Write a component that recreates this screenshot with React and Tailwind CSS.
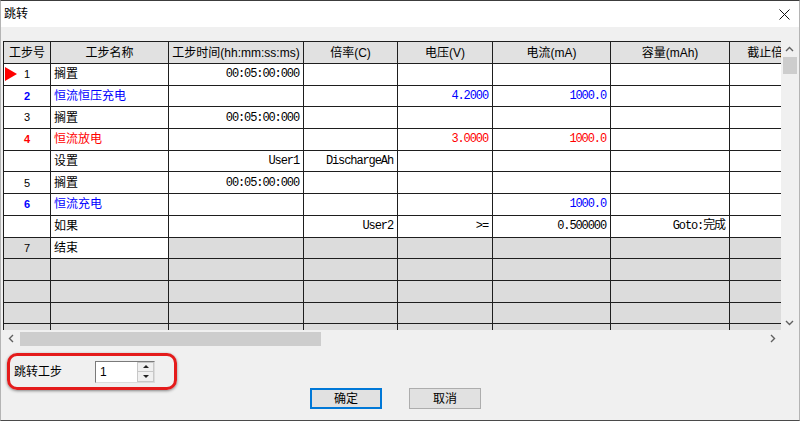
import React from 'react';

const cjk = { fontFamily: '"Liberation Sans", "Noto Sans CJK SC", sans-serif' };
const mono = { fontFamily: '"Liberation Mono", "Noto Sans CJK SC", monospace' };

const widths = ['w-[48px]', 'w-[118px]', 'w-[135px]', 'w-[94px]', 'w-[95px]', 'w-[118px]', 'w-[119px]', 'w-[100px]'];

const headers = ['工步号', '工步名称', '工步时间(hh:mm:ss:ms)', '倍率(C)', '电压(V)', '电流(mA)', '容量(mAh)', '截止倍率(C)'];

const rows = [
  { no: '1', mark: true, name: '搁置', cells: ['00:05:00:000', '', '', '', '', ''] },
  { no: '2', color: 'blue', name: '恒流恒压充电', cells: ['', '', '4.2000', '1000.0', '', ''] },
  { no: '3', name: '搁置', cells: ['00:05:00:000', '', '', '', '', ''] },
  { no: '4', color: 'red', name: '恒流放电', cells: ['', '', '3.0000', '1000.0', '', ''] },
  { no: '', name: '设置', cells: ['User1', 'DischargeAh', '', '', '', ''] },
  { no: '5', name: '搁置', cells: ['00:05:00:000', '', '', '', '', ''] },
  { no: '6', color: 'blue', name: '恒流充电', cells: ['', '', '', '1000.0', '', ''] },
  { no: '', name: '如果', cells: ['', 'User2', '>=', '0.500000', 'Goto:完成', ''] },
  { no: '7', name: '结束', end: true, cells: ['', '', '', '', '', ''] },
];

const colorCls = { blue: 'text-[#0000ff]', red: 'text-[#ff0000]' };

const Chevron = ({ d, className }) => (
  <svg width="9" height="9" viewBox="0 0 9 9" className={className}>
    <path d={d} fill="none" stroke="#606060" strokeWidth="1.4" />
  </svg>
);

const GridRow = ({ row }) => {
  const gray = !row || row.end;
  const txt = row && row.color ? colorCls[row.color] : 'text-black';
  const bgRest = gray ? 'bg-[#dcdcdc]' : 'bg-white';
  return (
    <div className="flex h-[21.7px] shrink-0">
      <div className={`${widths[0]} shrink-0 relative border-l border-r border-b border-[#1e1e1e] ${bgRest} flex items-center justify-center`}>
        {row && row.mark && (
          <span className="absolute left-[1px] top-[3px] w-0 h-0 border-t-[7px] border-b-[7px] border-l-[12px] border-t-transparent border-b-transparent border-l-[#ff0000]" />
        )}
        {row && (
          <span className={`text-[11px] ${row.color ? 'font-bold' : ''} ${txt}`} style={{ fontFamily: '"Liberation Sans", sans-serif' }}>
            {row.no}
          </span>
        )}
      </div>
      <div className={`${widths[1]} shrink-0 border-r border-b border-[#1e1e1e] ${row ? 'bg-white' : 'bg-[#dcdcdc]'} flex items-center pl-[3px] text-[12px] ${txt}`} style={cjk}>
        {row ? row.name : ''}
      </div>
      {widths.slice(2).map((w, i) => (
        <div
          key={i}
          className={`${w} shrink-0 border-r border-b border-[#1e1e1e] ${bgRest} flex items-center justify-end pr-[4px] text-[12px] tracking-[-1.1px] whitespace-nowrap overflow-hidden ${txt}`}
          style={mono}
        >
          {row ? row.cells[i] : ''}
        </div>
      ))}
    </div>
  );
};

const App = () => {
  return (
    <div className="w-[800px] h-[421px] bg-[#f0f0f0] border-t border-b border-t-[#3c3c3c] border-b-[#4a4a4a] border-l border-r border-l-[#b4b4b4] border-r-[#b4b4b4] flex flex-col overflow-hidden" style={cjk}>
      <div className="h-[26px] shrink-0 bg-white flex items-center justify-between pl-[3px] pr-[9px]">
        <span className="text-[12px] text-black">跳转</span>
        <svg width="11" height="11" viewBox="0 0 11 11">
          <path d="M0.5 0.5 L10.5 10.5 M10.5 0.5 L0.5 10.5" stroke="#111" strokeWidth="1" />
        </svg>
      </div>

      <div className="mt-[14px] ml-[2px] w-[794px] h-[306px] flex shrink-0">
        <div className="w-[778px] flex flex-col">
          <div className="h-[289px] overflow-hidden flex flex-col">
            <div className="flex h-[23px] shrink-0">
              {headers.map((h, i) => (
                <div
                  key={i}
                  className={`${widths[i]} shrink-0 border-t border-r border-b ${i === 0 ? 'border-l' : ''} border-[#1e1e1e] bg-[#e1e1e1] flex items-center justify-center text-[12px] text-black whitespace-nowrap overflow-hidden`}
                >
                  {h}
                </div>
              ))}
            </div>
            {rows.map((r, i) => (
              <GridRow key={i} row={r} />
            ))}
            {[0, 1, 2, 3, 4].map((i) => (
              <GridRow key={'g' + i} />
            ))}
          </div>
          <div className="h-[17px] flex items-center">
            <div className="w-[17px] h-full flex items-center justify-center">
              <Chevron d="M6 1 L2.5 4.5 L6 8" />
            </div>
            <div className="w-[301px] h-[14px] bg-[#cdcdcd]" />
            <div className="flex-1" />
            <div className="w-[17px] h-full flex items-center justify-center">
              <Chevron d="M3 1 L6.5 4.5 L3 8" />
            </div>
          </div>
        </div>
        <div className="w-[16px] flex flex-col">
          <div className="h-[16px] flex items-center justify-center">
            <Chevron d="M1 6 L4.5 2.5 L8 6" />
          </div>
          <div className="ml-[2px] w-[14px] h-[17px] bg-[#cdcdcd]" />
          <div className="flex-1" />
          <div className="h-[16px] flex items-center justify-center">
            <Chevron d="M1 3 L4.5 6.5 L8 3" />
          </div>
          <div className="h-[17px]" />
        </div>
      </div>

      <div className="flex items-start flex-1">
        <div className="ml-[6px] mt-[6px] w-[170px] h-[37px] border-[3px] border-[#e41b1b] rounded-[10px] shadow-[0_1px_3px_rgba(0,0,0,0.45)] flex items-center pl-[4px]">
          <span className="text-[12px] text-black">跳转工步</span>
          <div className="ml-[33px] w-[60px] h-[22px] bg-white border border-t-[#7a7a7a] border-l-[#7a7a7a] border-r-[#dcdcdc] border-b-[#dcdcdc] flex">
            <span className="flex-1 pl-[4px] text-[12px] leading-[20px] text-black" style={{ fontFamily: '"Liberation Sans", sans-serif' }}>1</span>
            <div className="w-[17px] flex flex-col">
              <div className="flex-1 bg-[#f0f0f0] border border-[#c8c8c8] flex items-center justify-center">
                <span className="w-0 h-0 border-l-[3px] border-r-[3px] border-b-[3px] border-l-transparent border-r-transparent border-b-[#222]" />
              </div>
              <div className="flex-1 bg-[#f0f0f0] border border-t-0 border-[#c8c8c8] flex items-center justify-center">
                <span className="w-0 h-0 border-l-[3px] border-r-[3px] border-t-[3px] border-l-transparent border-r-transparent border-t-[#222]" />
              </div>
            </div>
          </div>
        </div>
        <button className="ml-[133px] mt-[41px] w-[72px] h-[21px] bg-[#e1e1e1] border border-[#0078d7] shadow-[inset_0_0_0_1px_#0078d7] text-[12px] text-black flex items-center justify-center">
          确定
        </button>
        <button className="ml-[27px] mt-[41px] w-[72px] h-[21px] bg-[#e1e1e1] border border-[#adadad] text-[12px] text-black flex items-center justify-center">
          取消
        </button>
      </div>
    </div>
  );
};

export default App;
